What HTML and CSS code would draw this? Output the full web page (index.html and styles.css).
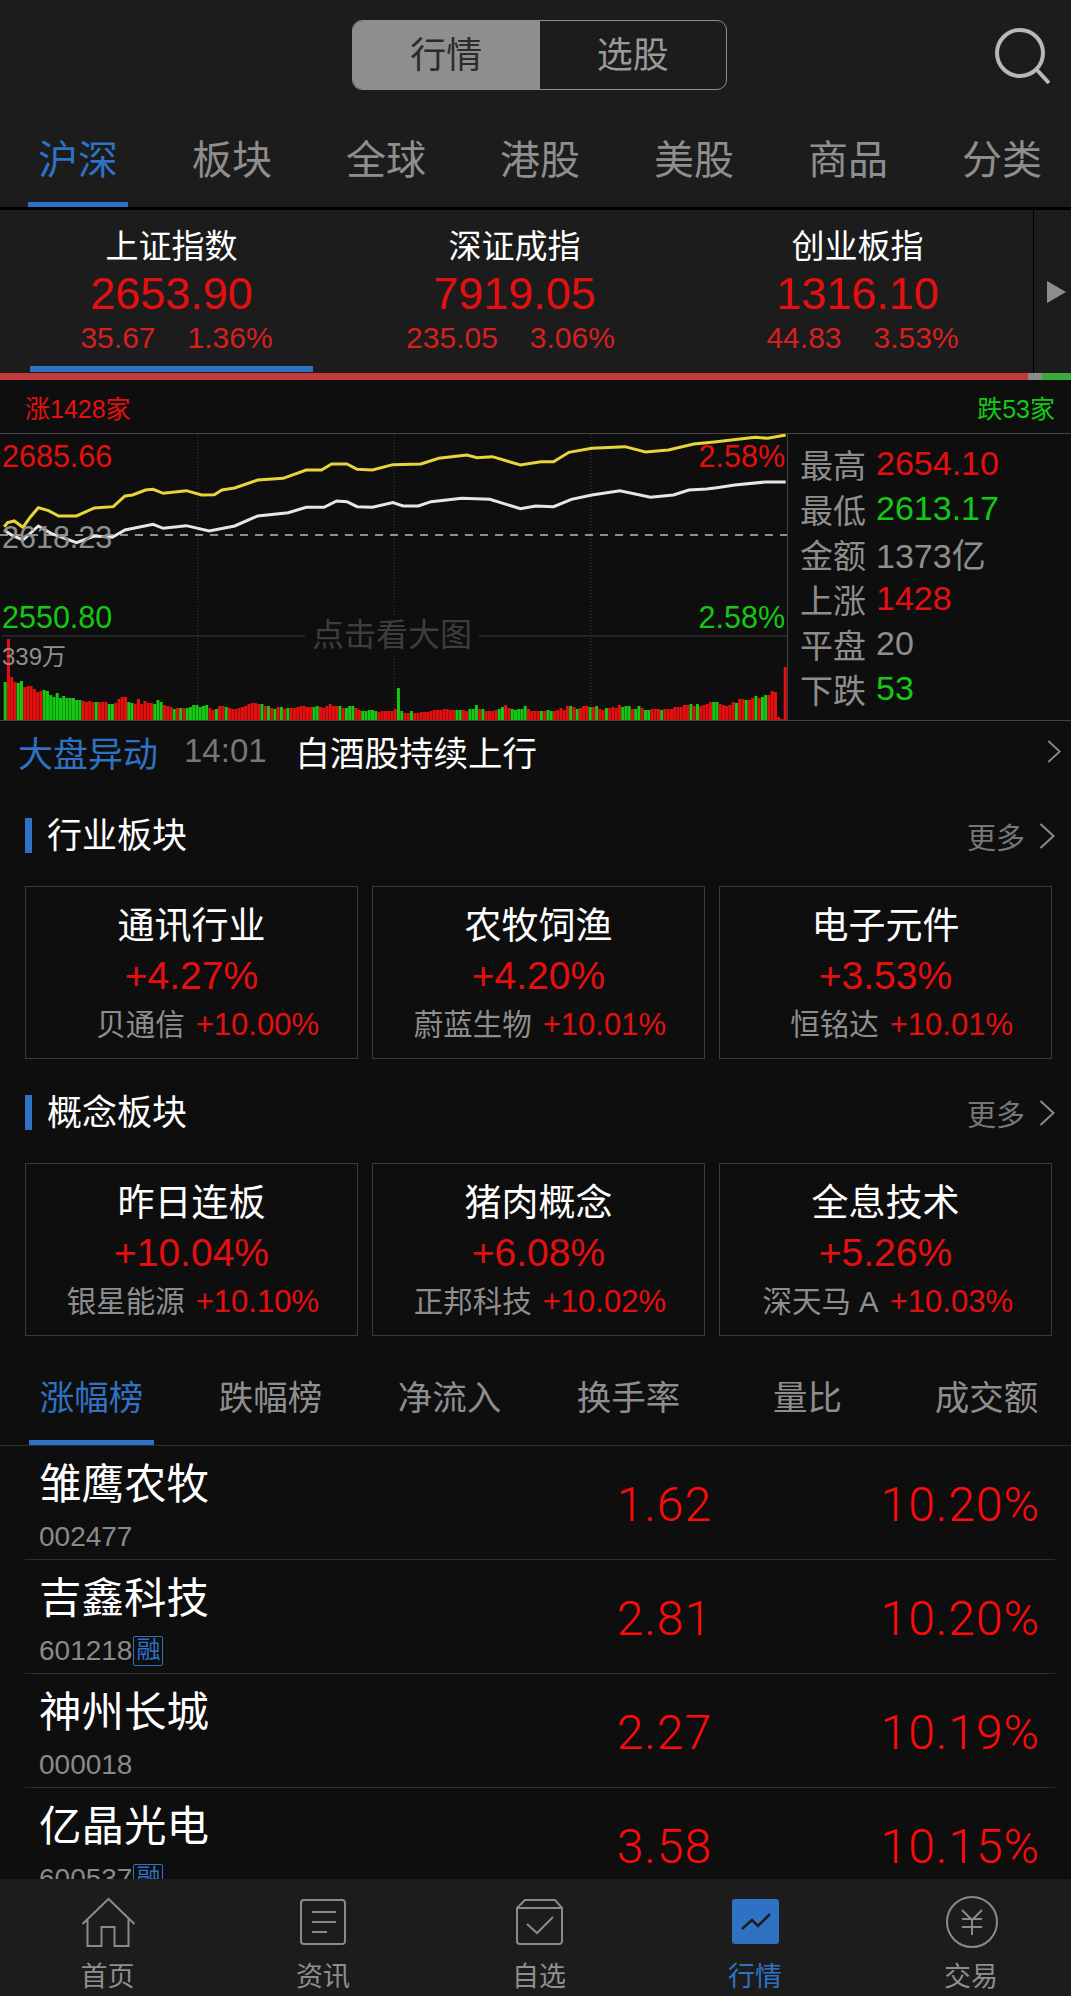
FILE: index.html
```html
<!DOCTYPE html>
<html lang="zh-CN">

<head>
    <meta charset="UTF-8">
    <meta name="viewport" content="width=device-width, initial-scale=1.0">
    <title>行情</title>
    <link rel="stylesheet" href="styles.css">
</head>

<body>
    <div class="content">
        <header class="topbar">
            <div class="segment">
                <span class="segment-item active">行情</span>
                <span class="segment-item">选股</span>
            </div>
            <svg class="search" viewBox="0 0 56 56">
                <circle cx="26" cy="25" r="23" />
                <path d="M43 42 L55 55" />
            </svg>
        </header>

        <nav class="tabs">
            <a class="tab active">沪深</a>
            <a class="tab">板块</a>
            <a class="tab">全球</a>
            <a class="tab">港股</a>
            <a class="tab">美股</a>
            <a class="tab">商品</a>
            <a class="tab">分类</a>
        </nav>

        <section class="indices">
            <div class="index active">
                <div class="index-name">上证指数</div>
                <div class="index-value">2653.90</div>
                <div class="index-change shift-right"><span>35.67</span><span>1.36%</span></div>
            </div>
            <div class="index">
                <div class="index-name">深证成指</div>
                <div class="index-value">7919.05</div>
                <div class="index-change shift-left"><span>235.05</span><span>3.06%</span></div>
            </div>
            <div class="index">
                <div class="index-name">创业板指</div>
                <div class="index-value">1316.10</div>
                <div class="index-change shift-right"><span>44.83</span><span>3.53%</span></div>
            </div>
            <div class="index-more"><i class="triangle"></i></div>
        </section>

        <div class="breadth">
            <i class="breadth-up"></i>
            <i class="breadth-flat"></i>
            <i class="breadth-down"></i>
        </div>

        <div class="counts">
            <span class="red">涨1428家</span>
            <span class="green">跌53家</span>
        </div>

        <section class="chart">
            <div class="plot">
                <svg id="plotSvg" class="plot-svg" viewBox="0 0 787 286">
                    <path class="grid-dot" d="M198 0 V286 M394 0 V286 M591 0 V286" />
                    <path class="grid-mid" d="M2 202 H787" />
                    <path class="grid-base" d="M0 101 H787" />
                    <g id="volume"></g>
                    <g transform="translate(0 -14) scale(.5102 .3333)">
                        <polyline class="line-yellow" points="8,320 15,308 28,303 45,322 60,290 75,263 95,272 115,288 150,288 185,264 222,260 245,228 260,225 285,210 300,208 320,220 365,212 395,225 420,224 435,210 460,204 505,180 555,175 600,150 630,150 650,132 680,132 700,148 730,150 770,134 825,132 860,115 915,105 935,113 965,110 1020,135 1060,125 1085,125 1115,97 1160,85 1225,80 1265,96 1310,90 1360,72 1400,66 1480,52 1505,55 1540,45" />
                        <polyline class="line-white" points="8,330 22,345 45,360 75,318 100,340 150,368 185,348 220,352 245,330 300,313 320,325 365,317 410,333 460,318 505,288 565,278 600,262 635,262 660,243 680,245 700,260 730,262 770,248 790,258 820,258 845,245 905,235 960,238 1020,266 1050,258 1085,260 1120,238 1160,225 1215,212 1275,232 1320,225 1350,210 1385,207 1405,203 1440,195 1500,186 1540,186" />
                    </g>
                </svg>
                <span class="plot-label label-top red">2685.66</span>
                <span class="plot-label label-top label-right red">2.58%</span>
                <span class="plot-label label-mid gray">2618.23</span>
                <span class="plot-label label-low green">2550.80</span>
                <span class="plot-label label-low label-right green">2.58%</span>
                <span class="plot-label label-vol gray">339万</span>
                <span class="plot-hint">点击看大图</span>
            </div>
            <ul class="stats">
                <li><span class="stat-name">最高</span><span class="red">2654.10</span></li>
                <li><span class="stat-name">最低</span><span class="green">2613.17</span></li>
                <li><span class="stat-name">金额</span><span class="gray">1373亿</span></li>
                <li><span class="stat-name">上涨</span><span class="red">1428</span></li>
                <li><span class="stat-name">平盘</span><span class="gray">20</span></li>
                <li><span class="stat-name">下跌</span><span class="green">53</span></li>
            </ul>
        </section>

        <div class="news">
            <span class="news-tag">大盘异动</span>
            <span class="news-time">14:01</span>
            <span class="news-text">白酒股持续上行</span>
            <svg class="chevron news-chevron" viewBox="0 0 16 26"><path d="M1.5 1 L14.5 13 L1.5 25" /></svg>
        </div>

        <div class="section-head">
            <h2 class="section-title">行业板块</h2>
            <span class="section-more">更多</span>
            <svg class="chevron" viewBox="0 0 16 26"><path d="M1.5 1 L14.5 13 L1.5 25" /></svg>
        </div>
        <div class="cards">
            <div class="card">
                <div class="card-name">通讯行业</div>
                <div class="card-pct">+4.27%</div>
                <div class="card-lead"><span class="card-stock">贝通信</span><span class="red">+10.00%</span></div>
            </div>
            <div class="card">
                <div class="card-name">农牧饲渔</div>
                <div class="card-pct">+4.20%</div>
                <div class="card-lead"><span class="card-stock">蔚蓝生物</span><span class="red">+10.01%</span></div>
            </div>
            <div class="card">
                <div class="card-name">电子元件</div>
                <div class="card-pct">+3.53%</div>
                <div class="card-lead"><span class="card-stock">恒铭达</span><span class="red">+10.01%</span></div>
            </div>
        </div>

        <div class="section-head second">
            <h2 class="section-title">概念板块</h2>
            <span class="section-more">更多</span>
            <svg class="chevron" viewBox="0 0 16 26"><path d="M1.5 1 L14.5 13 L1.5 25" /></svg>
        </div>
        <div class="cards">
            <div class="card">
                <div class="card-name">昨日连板</div>
                <div class="card-pct">+10.04%</div>
                <div class="card-lead"><span class="card-stock">银星能源</span><span class="red">+10.10%</span></div>
            </div>
            <div class="card">
                <div class="card-name">猪肉概念</div>
                <div class="card-pct">+6.08%</div>
                <div class="card-lead"><span class="card-stock">正邦科技</span><span class="red">+10.02%</span></div>
            </div>
            <div class="card">
                <div class="card-name">全息技术</div>
                <div class="card-pct">+5.26%</div>
                <div class="card-lead"><span class="card-stock">深天马 A</span><span class="red">+10.03%</span></div>
            </div>
        </div>

        <nav class="rank-tabs">
            <a class="rank-tab active">涨幅榜</a>
            <a class="rank-tab">跌幅榜</a>
            <a class="rank-tab">净流入</a>
            <a class="rank-tab">换手率</a>
            <a class="rank-tab">量比</a>
            <a class="rank-tab">成交额</a>
        </nav>

        <div class="rank-row">
            <div class="stock-info">
                <div class="stock-name">雏鹰农牧</div>
                <div class="stock-code">002477</div>
            </div>
            <div class="stock-num">1.62</div>
            <div class="stock-num">10.20%</div>
        </div>
        <div class="rank-row">
            <div class="stock-info">
                <div class="stock-name">吉鑫科技</div>
                <div class="stock-code">601218<span class="badge">融</span></div>
            </div>
            <div class="stock-num">2.81</div>
            <div class="stock-num">10.20%</div>
        </div>
        <div class="rank-row">
            <div class="stock-info">
                <div class="stock-name">神州长城</div>
                <div class="stock-code">000018</div>
            </div>
            <div class="stock-num">2.27</div>
            <div class="stock-num">10.19%</div>
        </div>
        <div class="rank-row">
            <div class="stock-info">
                <div class="stock-name">亿晶光电</div>
                <div class="stock-code">600537<span class="badge">融</span></div>
            </div>
            <div class="stock-num">3.58</div>
            <div class="stock-num">10.15%</div>
        </div>
    </div>

    <footer class="bottom-nav">
        <a class="nav-item">
            <svg class="nav-icon" viewBox="0 0 60 60">
                <path d="M4.5 31 L30.5 6 L56.5 31 M9.5 26 V53 H23.5 V34 H36.5 V53 H50.5 V26" />
            </svg>
            <span>首页</span>
        </a>
        <a class="nav-item">
            <svg class="nav-icon" viewBox="0 0 60 60">
                <rect x="8" y="7" width="44" height="44" rx="3" />
                <path d="M19 19 H43 M19 29 H43 M19 39 H34" />
            </svg>
            <span>资讯</span>
        </a>
        <a class="nav-item">
            <svg class="nav-icon" viewBox="0 0 60 60">
                <path d="M8 15 L16 7 H46 L53 15 V48 Q53 51 50 51 H11 Q8 51 8 48 Z M8 15 H53" />
                <path d="M18 31 L28 40 L44 24" />
            </svg>
            <span>自选</span>
        </a>
        <a class="nav-item active">
            <svg class="nav-icon" viewBox="0 0 60 60">
                <rect class="nav-icon-fill" x="7" y="6" width="47" height="45" rx="3" />
                <path class="nav-icon-dark" d="M17 36 L27 27 L33 33 L45 21" />
            </svg>
            <span>行情</span>
        </a>
        <a class="nav-item">
            <svg class="nav-icon" viewBox="0 0 60 60">
                <circle cx="31" cy="29" r="25" />
                <path d="M21 17 L31 27 L41 17 M21 26 H41 M21 34 H41 M31 27 V42" />
            </svg>
            <span>交易</span>
        </a>
    </footer>

    <script src="chart.js"></script>
</body>

</html>
```
FILE: styles.css
```css
* {
    box-sizing: border-box;
}

body {
    margin: 0;
    width: 1071px;
    height: 1996px;
    display: flex;
    flex-direction: column;
    overflow: hidden;
    background-color: #0e0e0e;
    color: #fff;
    font-family: "Liberation Sans", "Noto Sans CJK SC", sans-serif;
}

.red {
    color: #e60f0f;
}

.green {
    color: #14c914;
}

.gray {
    color: #8e8e8e;
}

.content {
    flex: 1;
    min-height: 0;
    overflow: hidden;
}

/* top bar */
.topbar {
    display: flex;
    justify-content: center;
    height: 100px;
    padding: 20px 0 0 8px;
    background-color: #1c1c1c;
    position: relative;
}

.segment {
    display: flex;
    width: 375px;
    height: 70px;
    border: 1px solid #8e8e8e;
    border-radius: 10px;
    overflow: hidden;
}

.segment-item {
    width: 50%;
    font-size: 36px;
    line-height: 70px;
    text-align: center;
    color: #9a9a9a;
}

.segment-item.active {
    background-color: #8e8e8e;
    color: #2b2b2b;
}

.search {
    position: absolute;
    right: 21px;
    top: 28px;
    width: 56px;
    height: 56px;
    fill: none;
    stroke: #b8b8b8;
    stroke-width: 4;
}

.tabs {
    display: flex;
    gap: 54px;
    height: 110px;
    padding-left: 28px;
    background-color: #1c1c1c;
    border-bottom: 3px solid #000;
}

.tab {
    flex: none;
    width: 100px;
    height: 107px;
    padding-top: 35px;
    font-size: 40px;
    line-height: 50px;
    text-align: center;
    color: #8e8e8e;
}

.tab.active {
    color: #2f72c4;
    border-bottom: 5px solid #2f72c4;
}

/* index summary */
.indices {
    display: flex;
    height: 163px;
    background-color: #1c1c1c;
}

.index {
    flex: none;
    width: 343px;
    padding: 17px 30px 0;
    text-align: center;
}

.index.active {
    height: 162px;
    background: linear-gradient(#2f72c4, #2f72c4) 30px 156px / 283px 6px no-repeat;
}

.index-name {
    font-size: 33px;
    line-height: 40px;
}

.index-value {
    margin-top: 2px;
    font-size: 45px;
    line-height: 50px;
    color: #e60f0f;
}

.index-change {
    display: flex;
    justify-content: center;
    gap: 32px;
    margin-top: 1px;
    font-size: 30px;
    line-height: 36px;
    color: #d62020;
}

.shift-right {
    padding-left: 10px;
}

.shift-left {
    padding-right: 8px;
}

.index-more {
    flex: 1;
    display: flex;
    align-items: center;
    margin-left: 4px;
    padding-left: 13px;
    border-left: 1px solid #000;
}

.triangle {
    width: 0;
    height: 0;
    border-left: 19px solid #8e8e8e;
    border-top: 11px solid transparent;
    border-bottom: 11px solid transparent;
}

.breadth {
    display: flex;
    height: 7px;
}

.breadth i {
    display: block;
}

.breadth-up {
    width: 1028px;
    background-color: #c23a3a;
}

.breadth-flat {
    width: 14px;
    background-color: #8c8c8c;
}

.breadth-down {
    flex: 1;
    background-color: #3aa83a;
}

.counts {
    display: flex;
    justify-content: space-between;
    align-items: center;
    height: 53px;
    padding: 1px 16px 0 25px;
    font-size: 25px;
}

/* time share chart */
.chart {
    display: flex;
    height: 288px;
    border-top: 1px solid #444;
    border-bottom: 1px solid #444;
}

.plot {
    position: relative;
    width: 788px;
    height: 286px;
    border-right: 1px solid #444;
}

.plot-svg {
    display: block;
    width: 787px;
    height: 286px;
}

.grid-dot {
    fill: none;
    stroke: #3c3c3c;
    stroke-dasharray: 1 2;
}

.grid-mid {
    stroke: #3a3a3a;
}

.grid-base {
    stroke: #8e8e8e;
    stroke-width: 2;
    stroke-dasharray: 8 7;
}

.line-yellow,
.line-white {
    fill: none;
    stroke-width: 3;
    vector-effect: non-scaling-stroke;
}

.line-yellow {
    stroke: #e8d53a;
}

.line-white {
    stroke: #e6e6e6;
}

.bar-up {
    fill: #e60f0f;
}

.bar-down {
    fill: #14c914;
}

.plot-label {
    position: absolute;
    left: 2px;
    font-size: 30.5px;
    line-height: 36px;
}

.label-right {
    left: auto;
    right: 2px;
}

.label-top {
    top: 4px;
}

.label-mid {
    top: 85px;
}

.label-low {
    top: 165px;
}

.label-vol {
    top: 208px;
    font-size: 24px;
    line-height: 30px;
}

.plot-hint {
    position: absolute;
    left: 305px;
    top: 181px;
    padding: 0 7px;
    font-size: 32px;
    line-height: 40px;
    color: #3d3d3d;
    background-color: #0e0e0e;
}

.stats {
    flex: 1;
    margin: 0;
    padding: 7px 0 0 12px;
    list-style: none;
    font-size: 34px;
}

.stats li {
    display: flex;
    align-items: center;
    height: 45px;
}

.stat-name {
    width: 76px;
    font-size: 33px;
    color: #8e8e8e;
}

/* news strip */
.news {
    display: flex;
    align-items: center;
    height: 64px;
    padding: 0 10px 4px 18px;
}

.news-tag {
    font-size: 35px;
    color: #2f72c4;
}

.news-time {
    margin-left: 26px;
    font-size: 33px;
    color: #777;
}

.news-text {
    margin-left: 29px;
    font-size: 34.5px;
}

.chevron {
    flex: none;
    width: 16px;
    height: 26px;
    fill: none;
    stroke: #8a8a8a;
    stroke-width: 2;
}

.news-chevron {
    margin-left: auto;
    width: 14px;
    height: 23px;
}

/* sector cards */
.section-head {
    display: flex;
    align-items: center;
    height: 100px;
    margin-top: 1px;
    padding: 0 16px 1px 25px;
}

.section-head.second {
    margin-top: 4px;
}

.section-title {
    flex: 1;
    margin: 0;
    padding-left: 15px;
    border-left: 7px solid #2f72c4;
    font-size: 35px;
    font-weight: 400;
    line-height: 35px;
}

.section-more {
    margin-right: 14px;
    font-size: 29px;
    color: #777;
}

.cards {
    display: grid;
    grid-template-columns: repeat(3, 333px);
    column-gap: 14px;
    height: 173px;
    padding-left: 25px;
}

.card {
    border: 1px solid #3a3a3a;
    text-align: center;
}

.card-name {
    margin-top: 15px;
    font-size: 37px;
    line-height: 50px;
}

.card-pct {
    margin-top: -1px;
    font-size: 39px;
    line-height: 50px;
    color: #e60f0f;
}

.card-lead {
    display: flex;
    justify-content: flex-end;
    gap: 11px;
    padding-right: 38px;
    margin-top: 4px;
    font-size: 31px;
    line-height: 40px;
}

.card-stock {
    font-size: 29.5px;
    color: #8e8e8e;
}

/* ranking */
.rank-tabs {
    display: flex;
    gap: 54px;
    height: 110px;
    padding-left: 29px;
    border-bottom: 1px solid #2e2e2e;
}

.rank-tab {
    flex: none;
    width: 125px;
    height: 109px;
    padding-top: 39px;
    font-size: 34.5px;
    line-height: 46px;
    text-align: center;
    white-space: nowrap;
    color: #8e8e8e;
}

.rank-tab.active {
    color: #2f72c4;
    border-bottom: 5px solid #2f72c4;
}

.rank-row {
    display: grid;
    grid-template-columns: 1fr 200px 328px;
    align-items: center;
    height: 114px;
    margin: 0 16px 0 25px;
    padding: 0 15px 0 14px;
    border-bottom: 1px solid #2e2e2e;
}

.stock-info {
    padding-top: 4px;
}

.stock-name {
    font-size: 42.5px;
    line-height: 56px;
}

.stock-code {
    display: flex;
    align-items: center;
    margin-top: 8px;
    font-size: 28px;
    line-height: 32px;
    color: #8a8a8a;
}

.badge {
    width: 30px;
    height: 30px;
    margin-left: 1px;
    border: 1.5px solid #2f72c4;
    border-radius: 2px;
    font-size: 24px;
    line-height: 26px;
    text-align: center;
    color: #2f72c4;
}

.stock-num {
    padding-top: 3px;
    font-family: Roboto, "Liberation Sans", sans-serif;
    font-size: 48px;
    font-weight: 300;
    letter-spacing: 1px;
    text-align: right;
    color: #ff0a0a;
}

/* bottom nav */
.bottom-nav {
    flex: none;
    display: grid;
    grid-template-columns: 215px repeat(4, 216px);
    height: 117px;
    padding-top: 14px;
    background-color: #1c1c1c;
}

.nav-item {
    display: flex;
    flex-direction: column;
    align-items: center;
    font-size: 27px;
    line-height: 30px;
    color: #8e8e8e;
}

.nav-item span {
    margin-top: 9px;
}

.nav-item.active {
    color: #2f72c4;
}

.nav-icon {
    width: 60px;
    height: 60px;
    fill: none;
    stroke: #8a8a8a;
    stroke-width: 2;
}

.nav-icon-fill {
    fill: #2f72c4;
    stroke: none;
}

.nav-icon-dark {
    stroke: #1c1c1c;
    stroke-width: 2.5;
}
```
FILE: chart.js
```js
// volume per minute, r = up, g = down
const volumes = 'g38 r81 r43 r38 g37 g39 r33 r34 r34 r31 r28 r29 g30 g29 g25 g23 g27 g22 g24 g22 g22 g22 g20 g20 r19 r18 r19 r18 g18 r18 r18 r18 g16 g16 r17 r21 r23 r23 g18 g17 r16 r21 r16 r19 r17 r17 g16 g20 g18 r15 r14 r13 g11 r12 g12 r12 g12 g13 g15 g15 g13 g14 g15 r12 r10 g11 r14 r14 g13 r12 r11 r11 r12 r13 r14 r16 r17 r17 r16 g16 r14 '
    + 'g14 r12 g11 r13 g13 r11 g12 r12 r12 r13 r14 r14 r13 r13 g13 g14 r13 r12 r14 r16 r14 r14 g14 r12 g12 g14 g14 r12 r10 g9 g9 g10 g10 g9 r8 r9 r9 r9 r9 r11 g32 g9 r7 r7 g9 r7 r7 r8 r8 r8 r9 r10 r10 r10 r11 r11 r10 r10 g10 g10 r10 r9 g11 g11 g15 r11 g11 r9 r9 r9 r10 g11 g13 r15 r12 g11 g10 g11 g11 g14 r11 '
    + 'r9 r9 r9 g9 r9 g10 g9 r9 r10 r12 r10 r14 g14 r13 g11 r12 r14 r14 g13 r13 g14 r11 r10 g12 r12 r13 r12 r15 g13 g14 g14 r11 g11 g14 r12 g10 g10 r11 r11 r11 g10 r11 r11 r11 r13 r13 r13 r15 r15 g16 r14 g16 r14 r15 r16 r18 g18 g18 r16 r15 r14 r15 r18 g17 r21 r21 g20 r20 r22 g24 r22 g23 g25 r25 r29 r28 r3 r1 r53';

const volumeGroup = document.getElementById('volume');
const svgNs = 'http://www.w3.org/2000/svg';

volumes.split(' ').forEach(function (item, i) {
    const height = parseInt(item.slice(1));
    const bar = document.createElementNS(svgNs, 'rect');
    bar.setAttribute('x', 3.7 + i * 3.25);
    bar.setAttribute('y', 286 - height);
    bar.setAttribute('width', 3);
    bar.setAttribute('height', height);
    bar.setAttribute('class', item[0] === 'r' ? 'bar-up' : 'bar-down');
    volumeGroup.appendChild(bar);
});
```
